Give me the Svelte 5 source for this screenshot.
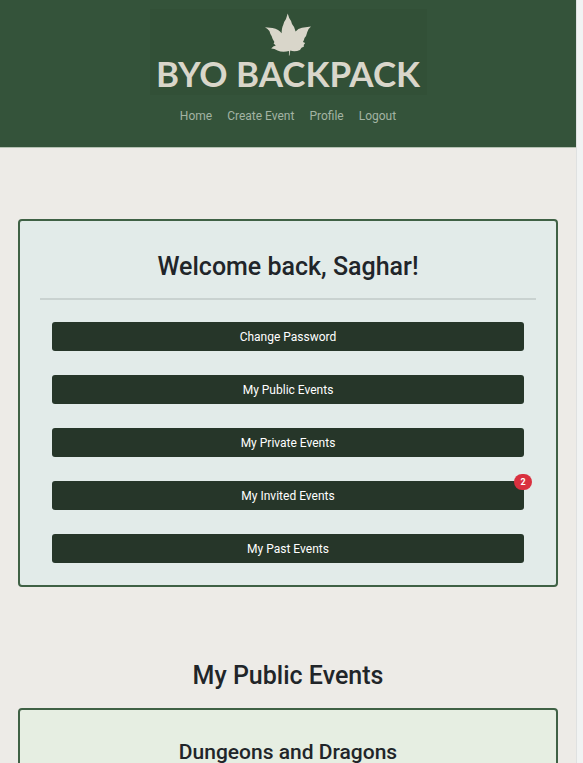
<script>
  const navLinks = ['Home', 'Create Event', 'Profile', 'Logout'];
  const actions = [
    { label: 'Change Password' },
    { label: 'My Public Events' },
    { label: 'My Private Events' },
    { label: 'My Invited Events', count: 2 },
    { label: 'My Past Events' }
  ];
  const events = [{ title: 'Dungeons and Dragons' }];
</script>

<div class="page">
  <header>
    <a class="logo" href="#home">
      <svg viewBox="0 0 46 43" width="46" height="43" aria-hidden="true">
        <path d="M22.7 .4 L24.2 5 Q26.5 8 27 11 Q29.5 13.5 30.6 18.5 Q33 15.5 37 14.7 L46 13.6 Q43 16 42.3 19 Q41.5 23 39.5 25 Q39 27.5 38 29 L40.2 30 L38.7 32 L39 33.6 Q36 34.5 35 37 Q30 39 25.3 37.6 L24.9 39.5 L24.6 42.5 L23.9 42.5 L24.1 38 Q17 39.5 12.5 37.4 Q9.5 35.5 6.2 35.4 Q8 33 10.8 32.4 L8.6 30.5 L9.4 29 Q7.5 26.5 6.6 23 Q5 20.5 4.4 18 Q2.8 15.8 0 14.2 L7.5 15 Q14 16.3 16.6 20.3 Q16.8 14.5 18.2 12 Q19 8.5 21 6 Z" />
      </svg>
      <span>BYO BACKPACK</span>
    </a>
    <nav>
      {#each navLinks as link}
        <a href="#{link.toLowerCase().replace(' ', '-')}">{link}</a>
      {/each}
    </nav>
  </header>

  <main>
    <section class="card welcome">
      <h1>Welcome back, Saghar!</h1>
      <hr />
      <div class="actions">
        {#each actions as action}
          <button type="button">
            {action.label}
            {#if action.count}<span class="badge">{action.count}</span>{/if}
          </button>
        {/each}
      </div>
    </section>

    <h2>My Public Events</h2>
    {#each events as event}
      <article class="card event">
        <h3>{event.title}</h3>
      </article>
    {/each}
  </main>
</div>

<style>
  :global(html) {
    background: #f1f3f3;
    scrollbar-width: none;
  }
  .page {
    box-sizing: border-box;
    min-height: 100vh;
    margin-right: 6px;
    border-right: 1px solid #dfe1e1;
    background: #edebe7;
    color: #212529;
    font-family: Roboto, 'Liberation Sans', sans-serif;
    font-size: 12px;
    line-height: 18px;
  }
  header {
    display: flex;
    flex-direction: column;
    align-items: center;
    gap: 12px;
    padding: 9px 0 22px;
    background: #34533a;
    border-bottom: 1px solid #b5c2b3;
  }
  .logo {
    box-sizing: border-box;
    display: flex;
    flex-direction: column;
    align-items: center;
    width: 277px;
    height: 86px;
    padding-top: 4px;
    background: #325037;
    color: #d9d6ca;
    font-family: Lato, sans-serif;
    font-size: 35px;
    font-weight: 700;
    line-height: 34px;
    text-decoration: none;
    white-space: nowrap;
  }
  .logo svg {
    fill: #d9d6ca;
  }
  nav {
    display: flex;
    gap: 15px;
  }
  nav a {
    color: #a3b3a3;
    text-decoration: none;
  }
  main {
    padding: 71px 18px 0;
  }
  .card {
    border: 2px solid #3f6145;
    border-radius: 4px;
    padding: 24px 20px 22px;
    text-align: center;
  }
  .welcome {
    background: #e2ebe9;
  }
  .event {
    background: #e6eee2;
  }
  h1,
  h2,
  h3 {
    margin: 0;
    font-weight: 500;
    text-align: center;
  }
  h1,
  h2 {
    font-size: 25px;
    line-height: 44px;
  }
  h2 {
    margin: 67px 0 10px;
  }
  h3 {
    font-size: 21px;
    line-height: 36px;
  }
  hr {
    height: 2px;
    margin: 9px 0 22px;
    border: 0;
    background: #c9d2d0;
  }
  .actions {
    display: flex;
    flex-direction: column;
    gap: 24px;
    padding: 0 12px;
  }
  button {
    position: relative;
    height: 29px;
    padding: 0;
    border: 0;
    border-radius: 3px;
    background: #263629;
    color: #fff;
    font: inherit;
  }
  .badge {
    position: absolute;
    top: -7px;
    right: -8px;
    width: 18px;
    border-radius: 8px;
    background: #d9303f;
    font-size: 9px;
    font-weight: 700;
    line-height: 16px;
  }
</style>
